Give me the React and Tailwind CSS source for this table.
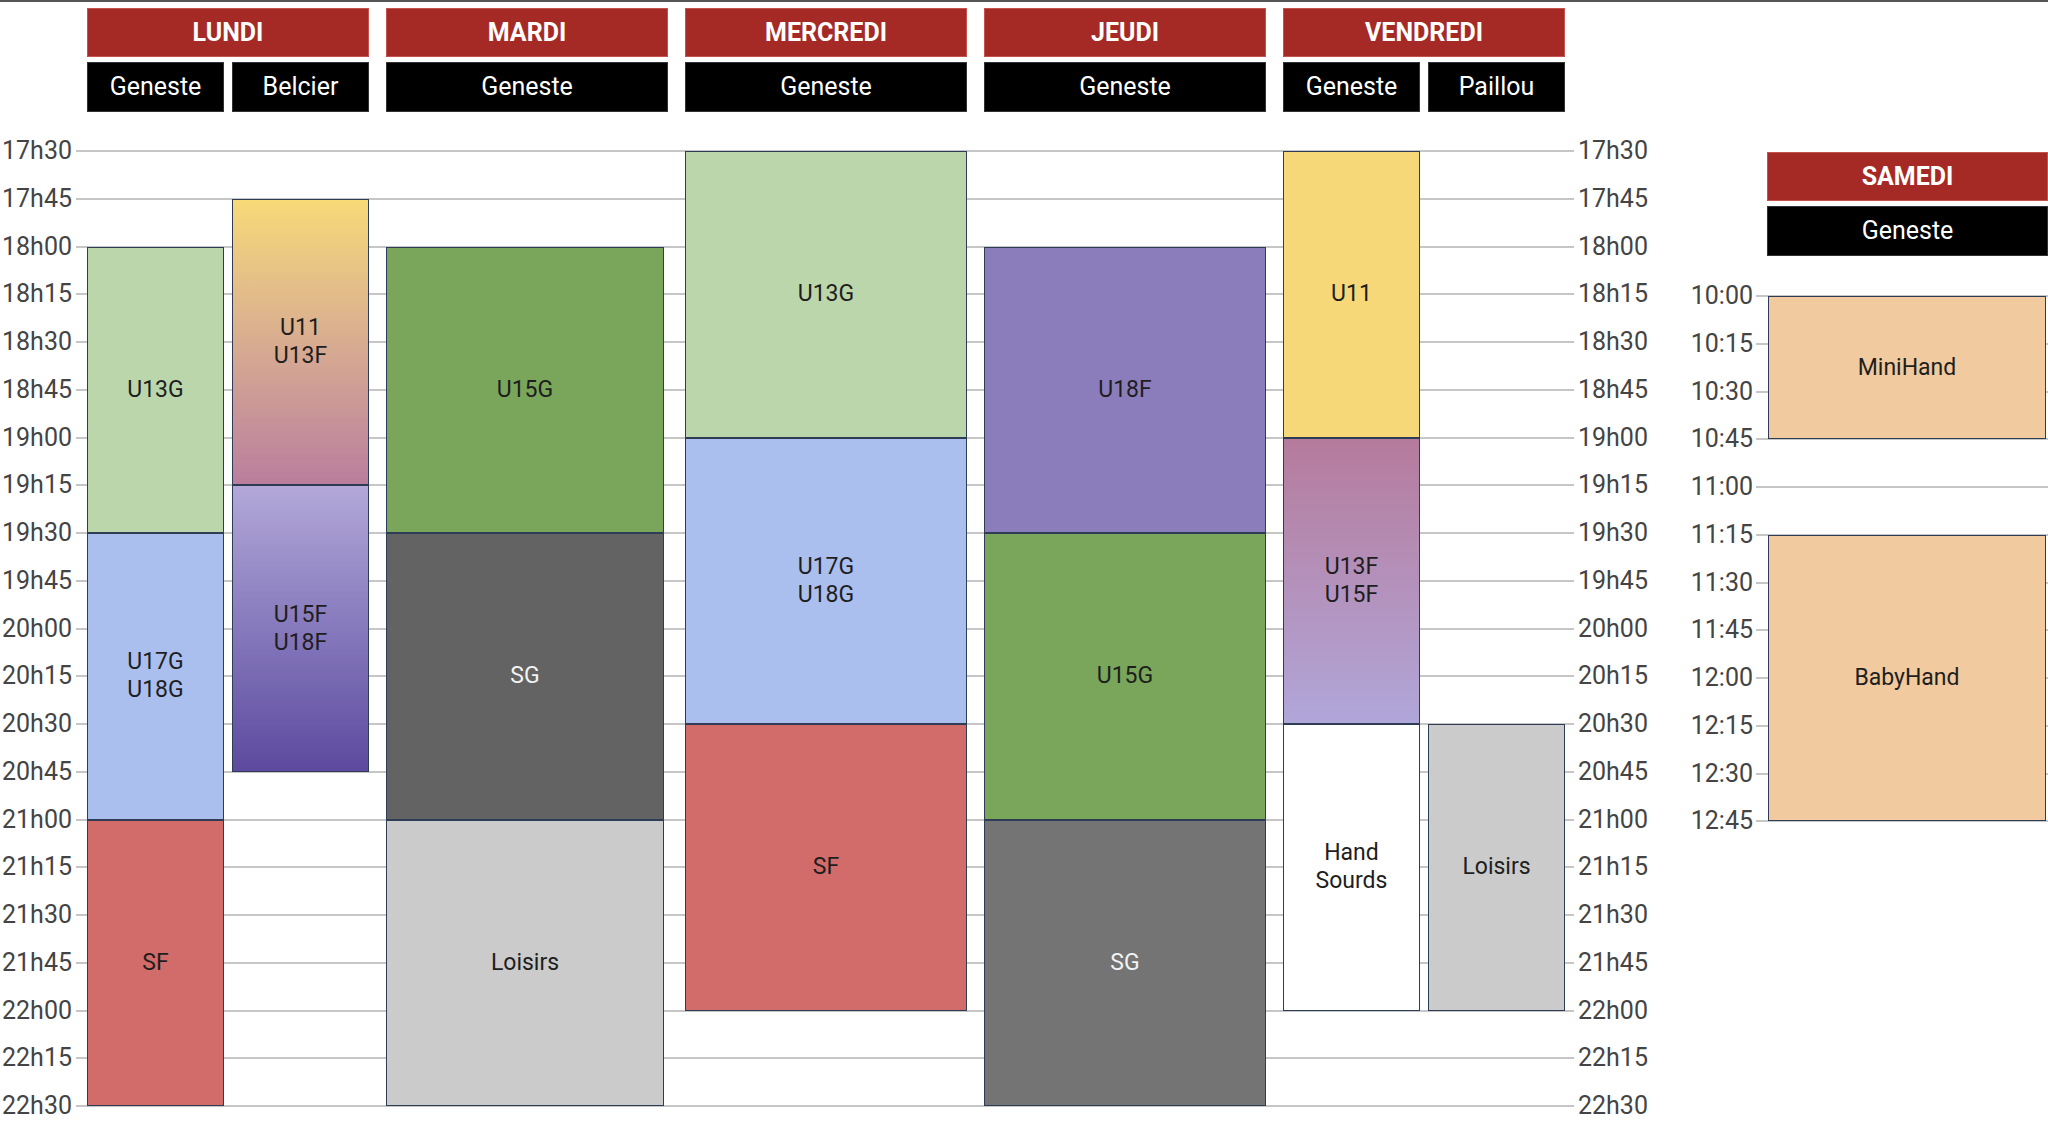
import React from "react";

const WEEK_COLS =
  "grid-cols-[76px_11px_137px_8px_137px_17px_282px_17px_282px_17px_282px_17px_137px_8px_137px_9px_1fr]";

const ROWS = [
  "row-start-1", "row-start-2", "row-start-3", "row-start-4", "row-start-5",
  "row-start-6", "row-start-7", "row-start-8", "row-start-9", "row-start-10",
  "row-start-11", "row-start-12", "row-start-13", "row-start-14", "row-start-15",
  "row-start-16", "row-start-17", "row-start-18", "row-start-19", "row-start-20",
  "row-start-21",
];

const WEEK_TIMES = [
  "17h30", "17h45", "18h00", "18h15", "18h30", "18h45", "19h00", "19h15",
  "19h30", "19h45", "20h00", "20h15", "20h30", "20h45", "21h00", "21h15",
  "21h30", "21h45", "22h00", "22h15", "22h30",
];

const SAT_TIMES = [
  "10:00", "10:15", "10:30", "10:45", "11:00", "11:15",
  "11:30", "11:45", "12:00", "12:15", "12:30", "12:45",
];

// days + sites header
const HEADERS = [
  { day: "LUNDI", span: "col-start-3 col-end-6", sites: [["Geneste", "col-start-3"], ["Belcier", "col-start-5"]] },
  { day: "MARDI", span: "col-start-7", sites: [["Geneste", "col-start-7"]] },
  { day: "MERCREDI", span: "col-start-9", sites: [["Geneste", "col-start-9"]] },
  { day: "JEUDI", span: "col-start-11", sites: [["Geneste", "col-start-11"]] },
  { day: "VENDREDI", span: "col-start-13 col-end-16", sites: [["Geneste", "col-start-13"], ["Paillou", "col-start-15"]] },
];

const EVENTS = [
  // lundi geneste
  { label: ["U13G"], pos: "col-start-3 row-start-3 row-span-6", bg: "bg-[#bcd6ac]" },
  { label: ["U17G", "U18G"], pos: "col-start-3 row-start-9 row-span-6", bg: "bg-[#aabfee]" },
  { label: ["SF"], pos: "col-start-3 row-start-15 row-span-6", bg: "bg-[#d26c6a]" },
  // lundi belcier
  { label: ["U11", "U13F"], pos: "col-start-5 row-start-2 row-span-6", bg: "bg-linear-to-b from-[#f7da77] to-[#ba7e9d]" },
  { label: ["U15F", "U18F"], pos: "col-start-5 row-start-8 row-span-6", bg: "bg-linear-to-b from-[#b3a8d8] to-[#5d4a9f]" },
  // mardi
  { label: ["U15G"], pos: "col-start-7 row-start-3 row-span-6 mr-[4px]", bg: "bg-[#79a65a]" },
  { label: ["SG"], pos: "col-start-7 row-start-9 row-span-6 mr-[4px]", bg: "bg-[#636363]", light: true },
  { label: ["Loisirs"], pos: "col-start-7 row-start-15 row-span-6 mr-[4px]", bg: "bg-[#cbcbcb]" },
  // mercredi
  { label: ["U13G"], pos: "col-start-9 row-start-1 row-span-6", bg: "bg-[#bcd6ac]" },
  { label: ["U17G", "U18G"], pos: "col-start-9 row-start-7 row-span-6", bg: "bg-[#aabfee]" },
  { label: ["SF"], pos: "col-start-9 row-start-13 row-span-6", bg: "bg-[#d26c6a]" },
  // jeudi
  { label: ["U18F"], pos: "col-start-11 row-start-3 row-span-6", bg: "bg-[#8b7dbb]" },
  { label: ["U15G"], pos: "col-start-11 row-start-9 row-span-6", bg: "bg-[#79a65a]" },
  { label: ["SG"], pos: "col-start-11 row-start-15 row-span-6", bg: "bg-[#747474]", light: true },
  // vendredi geneste
  { label: ["U11"], pos: "col-start-13 row-start-1 row-span-6", bg: "bg-[#f6d878]" },
  { label: ["U13F", "U15F"], pos: "col-start-13 row-start-7 row-span-6", bg: "bg-linear-to-b from-[#b57b9d] to-[#b0a6d9]" },
  { label: ["Hand", "Sourds"], pos: "col-start-13 row-start-13 row-span-6", bg: "bg-white" },
  // vendredi paillou
  { label: ["Loisirs"], pos: "col-start-15 row-start-13 row-span-6", bg: "bg-[#cbcbcb]" },
];

const SAT_EVENTS = [
  { label: ["MiniHand"], pos: "col-start-3 row-start-1 row-span-3 mr-[2px]", bg: "bg-[#f1cb9f]" },
  { label: ["BabyHand"], pos: "col-start-3 row-start-6 row-span-6 mr-[2px]", bg: "bg-[#f1cb9f]" },
];

const Slot = ({ label, pos, bg, light }) => (
  <div
    className={`${pos} ${bg} z-10 flex flex-col items-center justify-center border border-[#2e3d55] text-center text-[23px] leading-[28px] ${
      light ? "text-[#f2f2f2]" : "text-[#1e1e1e]"
    }`}
  >
    {label.map((l) => (
      <span key={l}>{l}</span>
    ))}
  </div>
);

const WeekGrid = () => (
  <div className={`grid ${WEEK_COLS} grid-rows-[repeat(20,47.75px)_0px] mt-[39px]`}>
    {WEEK_TIMES.map((t, i) => (
      <React.Fragment key={t}>
        <div className={`${ROWS[i]} col-start-2 col-end-17 self-start h-[2px] -translate-y-1/2 bg-[#c6c6c6]`} />
        <div className={`${ROWS[i]} col-start-1 self-start -translate-y-1/2 pr-[4px] text-right text-[25px] leading-[30px] text-[#444]`}>
          {t}
        </div>
        <div className={`${ROWS[i]} col-start-17 self-start -translate-y-1/2 pl-[4px] text-[25px] leading-[30px] text-[#444]`}>
          {t}
        </div>
      </React.Fragment>
    ))}
    {EVENTS.map((ev) => (
      <Slot key={ev.pos} {...ev} />
    ))}
  </div>
);

const SaturdayGrid = () => (
  <div className="grid grid-cols-[102px_12px_1fr] grid-rows-[repeat(11,47.75px)_0px] mt-[40px]">
    {SAT_TIMES.map((t, i) => (
      <React.Fragment key={t}>
        <div className={`${ROWS[i]} col-start-2 col-end-4 self-start h-[2px] -translate-y-1/2 bg-[#c6c6c6]`} />
        <div className={`${ROWS[i]} col-start-1 self-start -translate-y-1/2 pr-[3px] text-right text-[25px] leading-[30px] text-[#444]`}>
          {t}
        </div>
      </React.Fragment>
    ))}
    {SAT_EVENTS.map((ev) => (
      <Slot key={ev.pos} {...ev} />
    ))}
  </div>
);

export default function App() {
  return (
    <div className="flex h-[1130px] w-[2048px] overflow-hidden border-t-2 border-[#555] bg-white font-['Roboto',sans-serif]">
      {/* weekdays */}
      <section className="flex w-[1654px] shrink-0 flex-col pt-[6px]">
        <div className={`grid ${WEEK_COLS} grid-rows-[49px_50px] gap-y-[5px]`}>
          {HEADERS.map(({ day, span, sites }) => (
            <React.Fragment key={day}>
              <div className={`${span} row-start-1 flex items-center justify-center border border-[#c4524d] bg-[#a52a25] text-[25px] font-bold text-white`}>
                {day}
              </div>
              {sites.map(([site, col]) => (
                <div
                  key={site + col}
                  className={`${col} row-start-2 flex items-center justify-center border border-[#333] bg-black text-[25px] text-white`}
                >
                  {site}
                </div>
              ))}
            </React.Fragment>
          ))}
        </div>
        <WeekGrid />
      </section>

      {/* samedi */}
      <section className="flex flex-1 flex-col pt-[150px]">
        <div className="grid grid-cols-[102px_12px_1fr] grid-rows-[49px_50px] gap-y-[5px]">
          <div className="col-start-3 row-start-1 -ml-[1px] flex items-center justify-center border border-[#c4524d] bg-[#a52a25] text-[25px] font-bold text-white">
            SAMEDI
          </div>
          <div className="col-start-3 row-start-2 -ml-[1px] flex items-center justify-center border border-[#333] bg-black text-[25px] text-white">
            Geneste
          </div>
        </div>
        <SaturdayGrid />
      </section>
    </div>
  );
}
